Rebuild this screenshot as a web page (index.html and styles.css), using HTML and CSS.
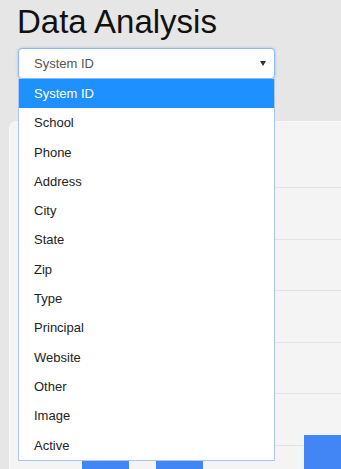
FILE: index.html
```html
<!DOCTYPE html>
<html lang="en">
<head>
    <meta charset="UTF-8">
    <meta name="viewport" content="width=device-width, initial-scale=1.0">
    <title>Data Analysis</title>
    <link rel="stylesheet" href="styles.css">
</head>
<body>
  <div class="page">
    <h1 class="title">Data Analysis</h1>

    <div class="picker">
      <div class="picker-box">
        <span class="picker-value">System ID</span>
        <svg class="picker-arrow" width="6" height="5" viewBox="0 0 6 5"><path d="M0 0H6L3 5Z" fill="#333"/></svg>
      </div>
      <ul class="picker-menu">
        <li class="picker-item active">System ID</li>
        <li class="picker-item">School</li>
        <li class="picker-item">Phone</li>
        <li class="picker-item">Address</li>
        <li class="picker-item">City</li>
        <li class="picker-item">State</li>
        <li class="picker-item">Zip</li>
        <li class="picker-item">Type</li>
        <li class="picker-item">Principal</li>
        <li class="picker-item">Website</li>
        <li class="picker-item">Other</li>
        <li class="picker-item">Image</li>
        <li class="picker-item">Active</li>
      </ul>
    </div>

    <div class="card">
      <div class="chart">
        <div class="bar" style="height: 27px"></div>
        <div class="bar" style="height: 27px"></div>
        <div class="bar" style="height: 10px"></div>
        <div class="bar" style="height: 52px"></div>
      </div>
    </div>
  </div>
</body>
</html>
```

FILE: styles.css
```css
body {
    margin: 0;
    font-family: "Liberation Sans", Arial, sans-serif;
    background-color: #e6e6e6;
}

.page {
    height: 469px;
    overflow: hidden;
}

.title {
    margin: 5px 0 0 17px;
    font-size: 33px;
    line-height: 33px;
    font-weight: normal;
    color: #111111;
}

.picker {
    position: relative;
    margin: 10px 0 0 18px;
    width: 257px;
    z-index: 2;
}

.picker-box {
    height: 29px;
    display: flex;
    align-items: center;
    justify-content: space-between;
    padding: 0 8px 0 15px;
    background-color: #ffffff;
    border: 1px solid #8db8f2;
    border-radius: 4px;
    box-shadow: 0 0 3px rgba(102, 160, 235, 0.5);
    font-size: 13px;
    color: #555555;
}

.picker-menu {
    position: absolute;
    top: 31px;
    left: 0;
    right: 0;
    list-style-type: none;
    margin: 0;
    padding: 0;
    background-color: #ffffff;
    border: 1px solid #aac5ee;
    border-top: none;
}

.picker-item {
    height: 29.3px;
    line-height: 29.3px;
    padding-left: 15px;
    font-size: 13px;
    color: #222222;
}

.picker-item.active {
    background-color: #1e90ff;
    color: #ffffff;
}

.card {
    margin: 42px 0 0 9px;
    height: 400px;
    background-color: #f4f4f4;
    border-left: 1px solid #f9f9f9;
    border-top: 1px solid #f9f9f9;
    border-radius: 8px 0 0 0;
    padding-top: 65px;
}

.chart {
    height: 300px;
    margin-left: 30px;
    display: flex;
    align-items: flex-end;
    gap: 27px;
    padding-left: 42px;
    background: repeating-linear-gradient(to bottom, #e3e3e3 0, #e3e3e3 1px, transparent 1px, transparent 51.6px);
}

.bar {
    width: 47px;
    flex-shrink: 0;
    background-color: #4285f4;
}
```
